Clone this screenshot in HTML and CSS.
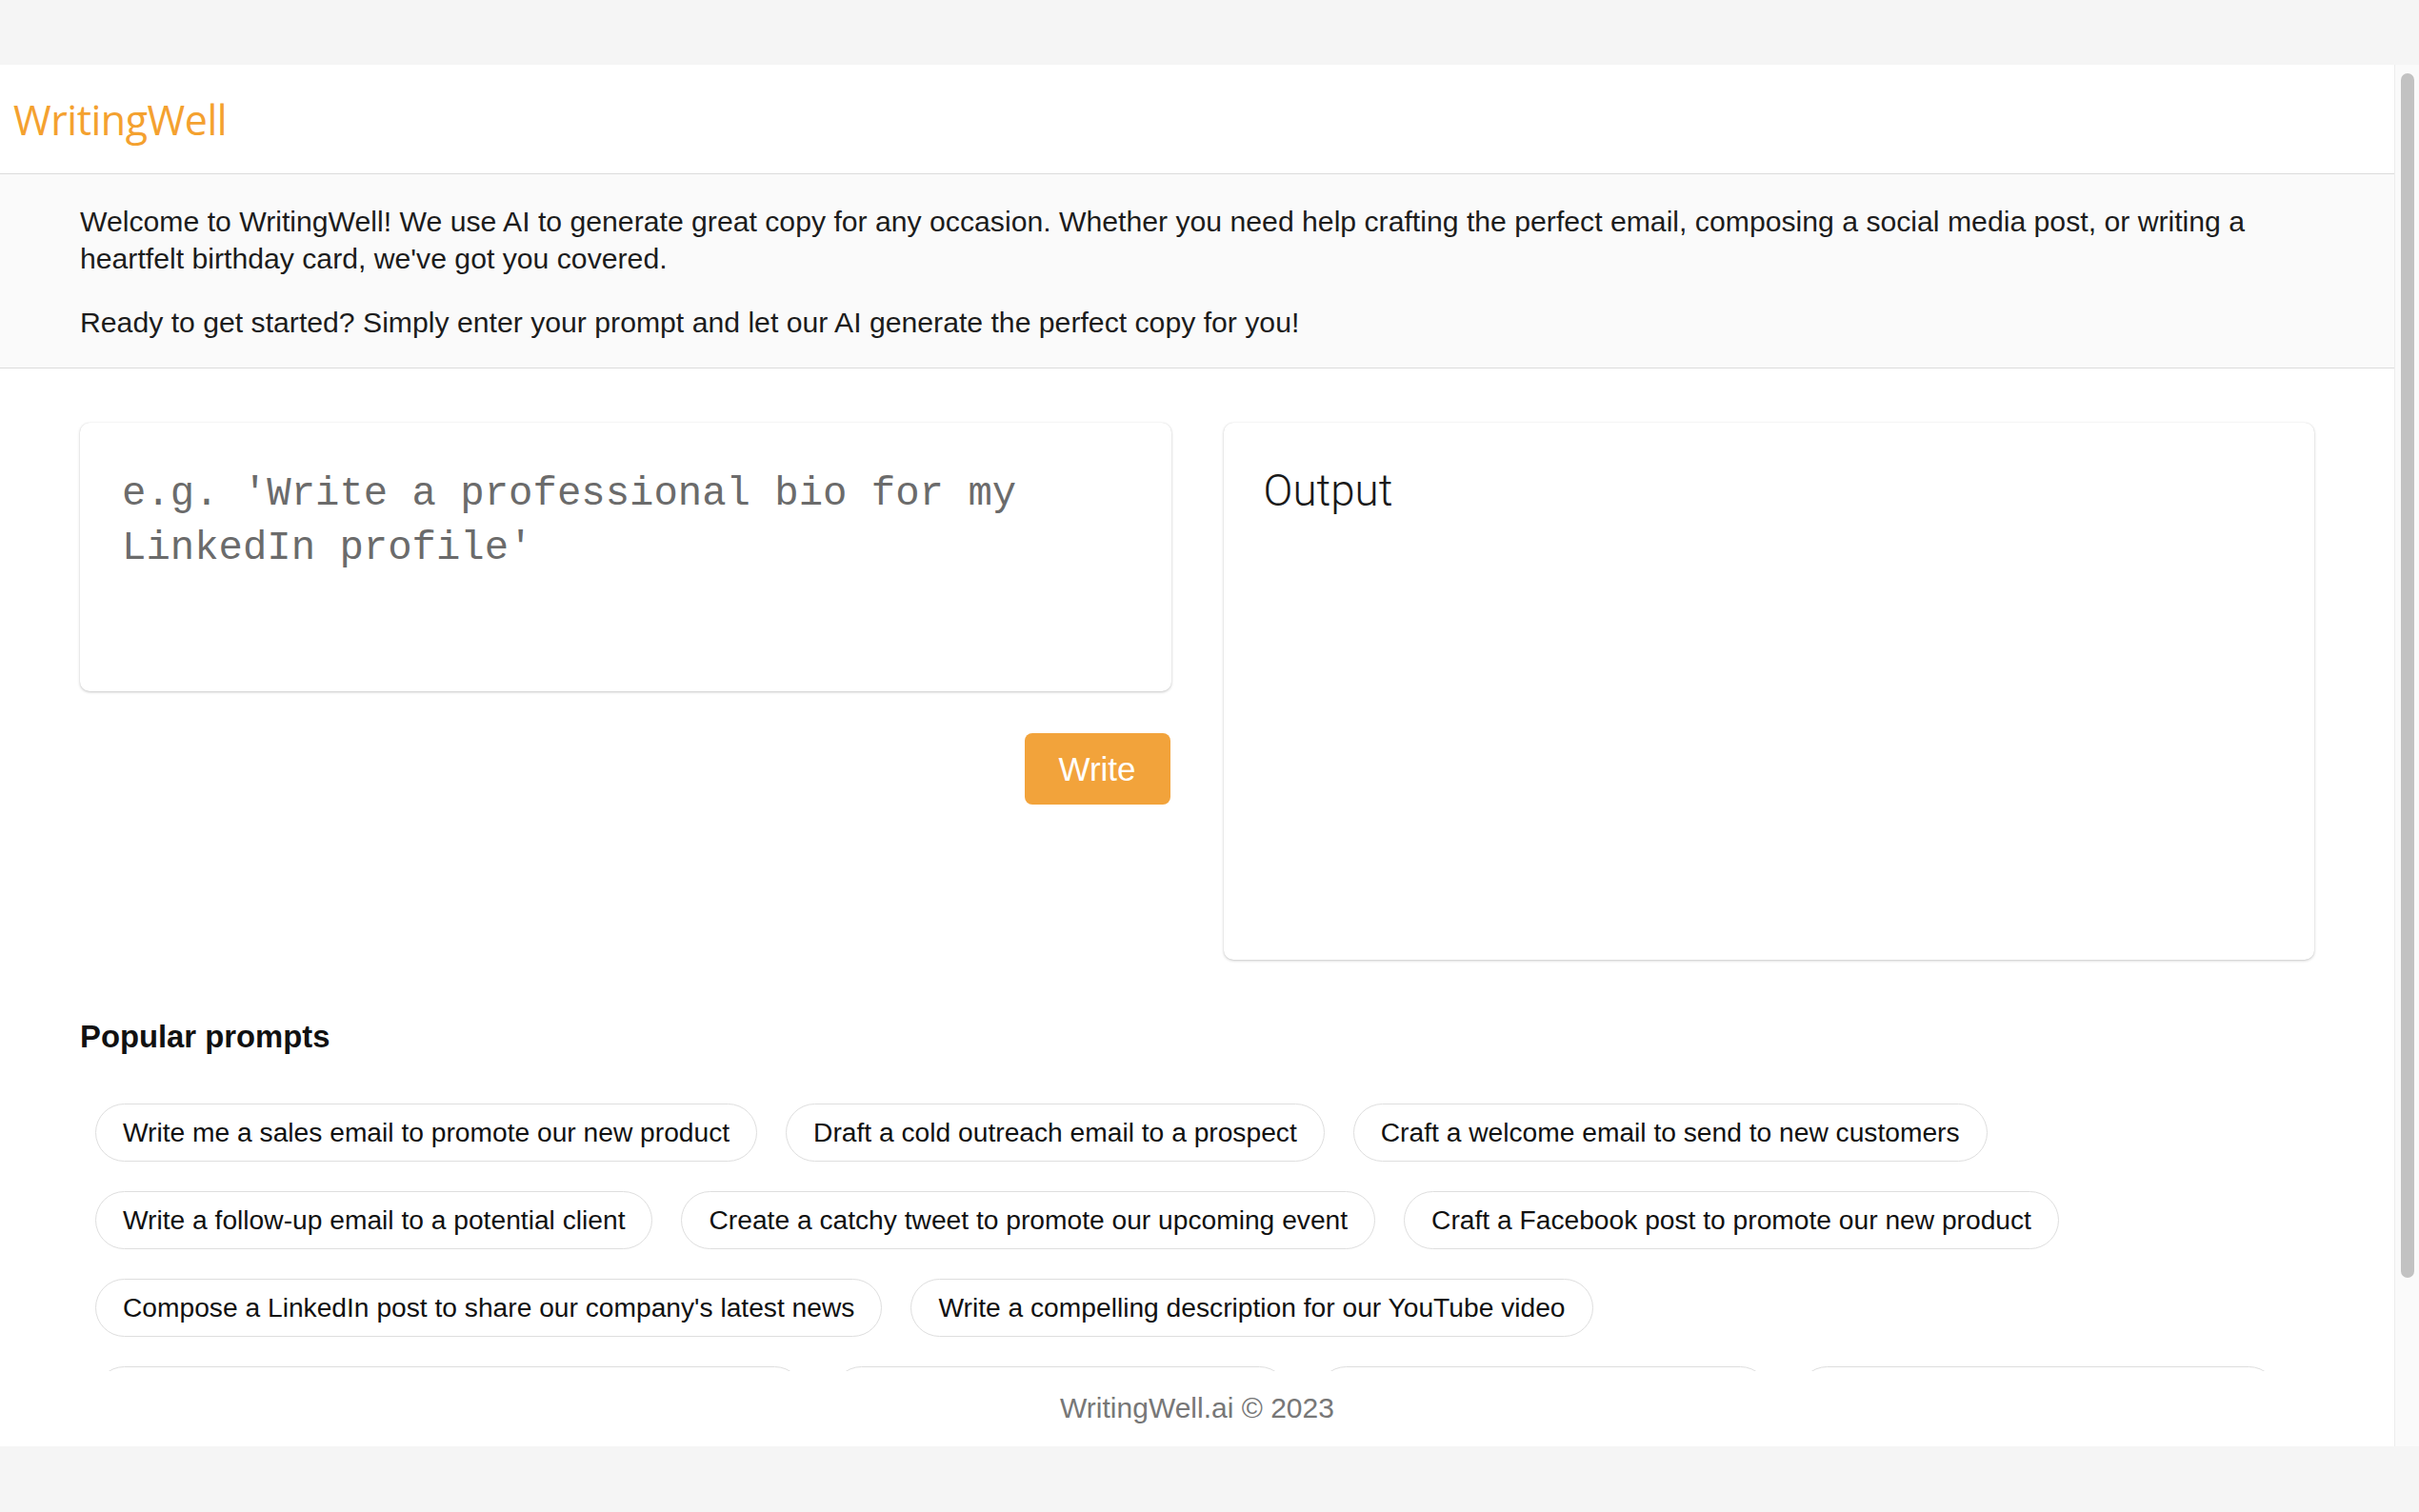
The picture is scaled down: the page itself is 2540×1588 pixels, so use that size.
FILE: index.html
```html
<!DOCTYPE html>
<html lang="en">
<head>
<meta charset="utf-8">
<title>WritingWell</title>
<link rel="stylesheet" href="styles.css">
</head>
<body>
<div class="window">
  <div class="page">
    <header class="header">
      <span class="logo">WritingWell</span>
    </header>
    <section class="intro">
      <p>Welcome to WritingWell! We use AI to generate great copy for any occasion. Whether you need help crafting the perfect email, composing a social media post, or writing a heartfelt birthday card, we've got you covered.</p>
      <p>Ready to get started? Simply enter your prompt and let our AI generate the perfect copy for you!</p>
    </section>
    <main class="main">
      <div class="left-col">
        <textarea class="prompt" placeholder="e.g. 'Write a professional bio for my LinkedIn profile'"></textarea>
        <div class="actions">
          <button class="write-btn" type="button">Write</button>
        </div>
      </div>
      <div class="output-card">
        <h2 class="output-title">Output</h2>
      </div>
    </main>
    <section class="popular">
      <h3 class="popular-title">Popular prompts</h3>
      <div class="chips">
        <span class="chip">Write me a sales email to promote our new product</span>
        <span class="chip">Draft a cold outreach email to a prospect</span>
        <span class="chip">Craft a welcome email to send to new customers</span>
        <span class="chip">Write a follow-up email to a potential client</span>
        <span class="chip">Create a catchy tweet to promote our upcoming event</span>
        <span class="chip">Craft a Facebook post to promote our new product</span>
        <span class="chip">Compose a LinkedIn post to share our company's latest news</span>
        <span class="chip">Write a compelling description for our YouTube video</span>
        <span class="chip">Generate a catchy slogan for our marketing campaigns</span>
        <span class="chip">Write a thank-you note for a client</span>
        <span class="chip">Draft a press release for a launch</span>
        <span class="chip">Write a heartfelt birthday card verse</span>
      </div>
    </section>
    <footer class="footer">WritingWell.ai © 2023</footer>
  </div>
  <div class="scrollbar"><div class="thumb"></div></div>
</div>
</body>
</html>
```

FILE: styles.css
```css
html, body {
  margin: 0;
  padding: 0;
}
body {
  height: 1588px;
  overflow: hidden;
  background: #f5f5f5;
  font-family: "Liberation Sans", Arial, sans-serif;
  color: #1a1a1a;
}
.window {
  margin-top: 68px;
  height: 1451px;
  display: flex;
  background: #ffffff;
}
.page {
  flex: 1;
  min-width: 0;
  display: flex;
  flex-direction: column;
  overflow: hidden;
}
.header {
  height: 114px;
  flex: none;
  display: flex;
  align-items: center;
  padding-left: 14px;
  border-bottom: 1px solid #dcdcdc;
}
.logo {
  font-family: "Open Sans", "Liberation Sans", sans-serif;
  font-size: 43px;
  color: #f4a12f;
  letter-spacing: -0.5px;
}
.intro {
  flex: none;
  background: #fafafa;
  border-bottom: 1px solid #dcdcdc;
  padding: 2px 84px 0;
}
.intro p {
  margin: 28px 0;
  font-size: 30.2px;
  line-height: 39px;
  color: #1c1c1c;
}
.main {
  flex: none;
  display: grid;
  grid-template-columns: 1fr 1fr;
  column-gap: 55px;
  padding: 57px 84px 0;
}
.left-col {
  display: flex;
  flex-direction: column;
}
.prompt {
  box-sizing: border-box;
  height: 282px;
  width: 100%;
  resize: none;
  border: none;
  outline: none;
  border-radius: 10px;
  padding: 47px 44px 40px;
  background: #fff;
  box-shadow: 0 1px 3px rgba(0, 0, 0, 0.22), 0 0 1px rgba(0, 0, 0, 0.12);
  font-family: "Liberation Mono", "Courier New", monospace;
  font-size: 42.3px;
  line-height: 56.5px;
  color: #333;
}
.prompt::placeholder {
  color: #6b6b6b;
}
.actions {
  display: flex;
  justify-content: flex-end;
  margin-top: 44px;
}
.write-btn {
  width: 153px;
  height: 75px;
  border: none;
  border-radius: 8px;
  background: #f2a33b;
  color: #fff;
  font-family: "Liberation Sans", Arial, sans-serif;
  font-size: 35px;
  padding: 0;
  margin-right: 1px;
}
.output-card {
  box-sizing: border-box;
  height: 564px;
  border-radius: 10px;
  background: #fff;
  box-shadow: 0 1px 3px rgba(0, 0, 0, 0.22), 0 0 1px rgba(0, 0, 0, 0.12);
  padding: 45px 42px;
}
.output-title {
  margin: 0;
  font-family: Roboto, "Liberation Sans", sans-serif;
  font-weight: 300;
  font-size: 45.7px;
  line-height: 53px;
  color: #1a1a1a;
}
.popular {
  flex: none;
  padding: 61px 84px 0;
}
.popular-title {
  margin: 0 0 50px;
  font-size: 32.8px;
  line-height: 40px;
  font-weight: 700;
  color: #111;
}
.chips {
  height: 281px;
  overflow: hidden;
  display: flex;
  flex-wrap: wrap;
  align-content: flex-start;
  gap: 31px 30px;
  padding-left: 16px;
}
.chip {
  box-sizing: border-box;
  height: 61px;
  padding: 0 28px;
  display: inline-flex;
  align-items: center;
  border: 1px solid #dedede;
  border-radius: 31px;
  font-size: 28.2px;
  color: #111;
  white-space: nowrap;
}
.footer {
  flex: none;
  height: 72px;
  padding-top: 3px;
  display: flex;
  align-items: center;
  justify-content: center;
  font-size: 30px;
  color: #777;
}
.scrollbar {
  flex: none;
  width: 25px;
  border-left: 1px solid #ececec;
  background: #fafafa;
  padding-top: 9px;
}
.thumb {
  width: 14px;
  height: 1265px;
  margin-left: 6px;
  border-radius: 7px;
  background: #c2c2c2;
}
```
